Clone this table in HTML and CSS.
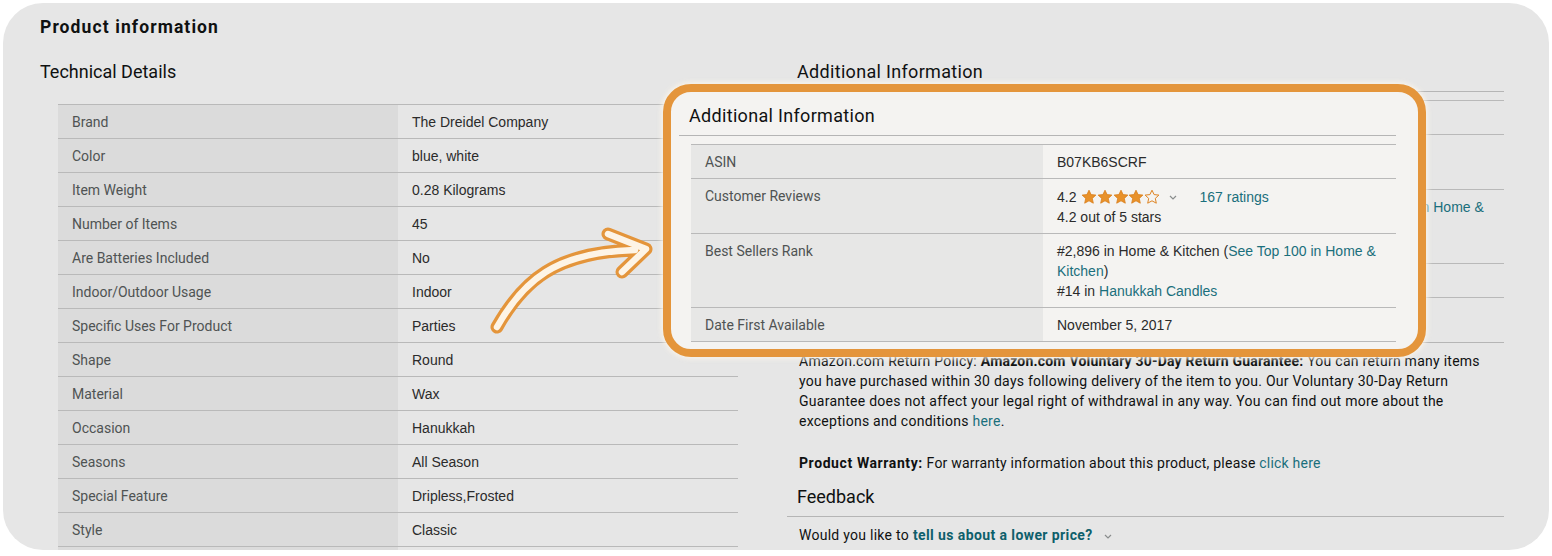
FILE: index.html
```html
<!DOCTYPE html>
<html lang="en">
<head>
<meta charset="utf-8">
<title>Product information</title>
<link rel="stylesheet" href="styles.css">
</head>
<body>
<div class="card">
  <h1 class="title">Product information</h1>
  <div class="cols">
    <section class="col-left">
      <h2 class="h2">Technical Details</h2>
      <table class="spec spec-tech">
        <tr><th>Brand</th><td>The Dreidel Company</td></tr>
        <tr><th>Color</th><td>blue, white</td></tr>
        <tr><th>Item Weight</th><td>0.28 Kilograms</td></tr>
        <tr><th>Number of Items</th><td>45</td></tr>
        <tr><th>Are Batteries Included</th><td>No</td></tr>
        <tr><th>Indoor/Outdoor Usage</th><td>Indoor</td></tr>
        <tr><th>Specific Uses For Product</th><td>Parties</td></tr>
        <tr><th>Shape</th><td>Round</td></tr>
        <tr><th>Material</th><td>Wax</td></tr>
        <tr><th>Occasion</th><td>Hanukkah</td></tr>
        <tr><th>Seasons</th><td>All Season</td></tr>
        <tr><th>Special Feature</th><td>Dripless,Frosted</td></tr>
        <tr><th>Style</th><td>Classic</td></tr>
        <tr class="row-empty"><th></th><td></td></tr>
      </table>
    </section>
    <section class="col-right">
      <div class="addl">
        <h2 class="h2 h2-rule h2-addl">Additional Information</h2>
        <table class="spec spec-addl">
          <tr><th>ASIN</th><td>B07KB6SCRF</td></tr>
          <tr><th>Customer Reviews</th><td><div class="rating"><span>4.2</span><span class="stars"><svg viewBox="0 0 16 16"><path class="s-full" d="M8 1.2L10.1 5.6L14.9 6.1L11.3 9.4L12.3 14.2L8 11.8L3.7 14.2L4.7 9.4L1.1 6.1L5.9 5.6Z"/></svg><svg viewBox="0 0 16 16"><path class="s-full" d="M8 1.2L10.1 5.6L14.9 6.1L11.3 9.4L12.3 14.2L8 11.8L3.7 14.2L4.7 9.4L1.1 6.1L5.9 5.6Z"/></svg><svg viewBox="0 0 16 16"><path class="s-full" d="M8 1.2L10.1 5.6L14.9 6.1L11.3 9.4L12.3 14.2L8 11.8L3.7 14.2L4.7 9.4L1.1 6.1L5.9 5.6Z"/></svg><svg viewBox="0 0 16 16"><path class="s-full" d="M8 1.2L10.1 5.6L14.9 6.1L11.3 9.4L12.3 14.2L8 11.8L3.7 14.2L4.7 9.4L1.1 6.1L5.9 5.6Z"/></svg><svg viewBox="0 0 16 16"><path class="s-empty" d="M8 1.2L10.1 5.6L14.9 6.1L11.3 9.4L12.3 14.2L8 11.8L3.7 14.2L4.7 9.4L1.1 6.1L5.9 5.6Z"/></svg></span><svg class="chev" viewBox="0 0 8 5"><path d="M1 1L4 4L7 1"/></svg><a class="link">167 ratings</a></div><div>4.2 out of 5 stars</div></td></tr>
          <tr><th>Best Sellers Rank</th><td>#2,896 in Home &amp; Kitchen (<a class="link">See Top 100 in Home &amp; Kitchen</a>)<br>#14 in <a class="link">Hanukkah Candles</a></td></tr>
          <tr><th>Date First Available</th><td>November 5, 2017</td></tr>
        </table>
      </div>
      <h2 class="h2 h2-rule h2-ws">Warranty &amp; Support</h2>
      <p class="para para-policy">Amazon.com Return Policy: <b>Amazon.com Voluntary 30-Day Return Guarantee:</b> You can return many items<br>you have purchased within 30 days following delivery of the item to you. Our Voluntary 30-Day Return<br>Guarantee does not affect your legal right of withdrawal in any way. You can find out more about the<br>exceptions and conditions <a class="link-ember">here</a>.</p>
      <p class="para para-warranty"><b>Product Warranty:</b> For warranty information about this product, please <a class="link-ember">click here</a></p>
      <h2 class="h2 h2-rule h2-fb">Feedback</h2>
      <p class="para para-fb">Would you like to <a class="link-bold">tell us about a lower price?</a><svg class="chev chev-fb" viewBox="0 0 8 5"><path d="M1 1L4 4L7 1"/></svg></p>
    </section>
  </div>

  <div class="callout">
    <div class="addl">
      <h2 class="h2 h2-rule h2-addl">Additional Information</h2>
      <table class="spec spec-addl spec-callout">
        <tr><th>ASIN</th><td>B07KB6SCRF</td></tr>
        <tr><th>Customer Reviews</th><td><div class="rating"><span>4.2</span><span class="stars"><svg viewBox="0 0 16 16"><path class="s-full" d="M8 1.2L10.1 5.6L14.9 6.1L11.3 9.4L12.3 14.2L8 11.8L3.7 14.2L4.7 9.4L1.1 6.1L5.9 5.6Z"/></svg><svg viewBox="0 0 16 16"><path class="s-full" d="M8 1.2L10.1 5.6L14.9 6.1L11.3 9.4L12.3 14.2L8 11.8L3.7 14.2L4.7 9.4L1.1 6.1L5.9 5.6Z"/></svg><svg viewBox="0 0 16 16"><path class="s-full" d="M8 1.2L10.1 5.6L14.9 6.1L11.3 9.4L12.3 14.2L8 11.8L3.7 14.2L4.7 9.4L1.1 6.1L5.9 5.6Z"/></svg><svg viewBox="0 0 16 16"><path class="s-full" d="M8 1.2L10.1 5.6L14.9 6.1L11.3 9.4L12.3 14.2L8 11.8L3.7 14.2L4.7 9.4L1.1 6.1L5.9 5.6Z"/></svg><svg viewBox="0 0 16 16"><path class="s-empty" d="M8 1.2L10.1 5.6L14.9 6.1L11.3 9.4L12.3 14.2L8 11.8L3.7 14.2L4.7 9.4L1.1 6.1L5.9 5.6Z"/></svg></span><svg class="chev" viewBox="0 0 8 5"><path d="M1 1L4 4L7 1"/></svg><a class="link">167 ratings</a></div><div>4.2 out of 5 stars</div></td></tr>
        <tr><th>Best Sellers Rank</th><td>#2,896 in Home &amp; Kitchen (<a class="link">See Top 100 in Home &amp; Kitchen</a>)<br>#14 in <a class="link">Hanukkah Candles</a></td></tr>
        <tr><th>Date First Available</th><td>November 5, 2017</td></tr>
      </table>
    </div>
  </div>

  <svg class="arrow" viewBox="0 0 180 115" width="180" height="115">
    <g fill="none" stroke-linecap="round" stroke-linejoin="round">
      <path class="arrow-out" d="M12 102 C 38 56, 70 27, 150 25 M123 9 L161 24 L137 47"/>
      <path class="arrow-in" d="M12 102 C 38 56, 70 27, 150 25 M123 9 L161 24 L137 47"/>
    </g>
  </svg>
</div>
</body>
</html>
```

FILE: styles.css
```css
html, body {
  margin: 0;
  padding: 0;
  background: #ffffff;
}

body {
  width: 1552px;
  height: 556px;
  overflow: hidden;
  font-family: Roboto, "Liberation Sans", Arial, sans-serif;
  color: #0f1111;
}

.card {
  position: relative;
  margin: 3px 0 0 3px;
  width: 1546px;
  height: 547px;
  box-sizing: border-box;
  padding: 11px 45px 0 37px;
  background: #e6e6e6;
  border-radius: 40px;
  overflow: hidden;
}

.title {
  margin: 0;
  font-size: 17.5px;
  line-height: 27px;
  font-weight: 700;
  letter-spacing: 1.1px;
  color: #0f1111;
}

.cols {
  display: flex;
  gap: 49px;
  margin-top: 19px;
}

.col-left {
  width: 698px;
  flex: none;
}

.col-right {
  width: 717px;
  flex: none;
}

.h2 {
  margin: 0;
  font-size: 18px;
  line-height: 24px;
  font-weight: 400;
  color: #0f1111;
}

.h2-addl {
  letter-spacing: 0.32px;
}

.col-left .h2 {
  margin-bottom: 20px;
}

.h2-rule {
  padding: 0 0 7px 10px;
  border-bottom: 1px solid #b5b5b5;
}

.spec {
  border-collapse: collapse;
  border-spacing: 0;
  table-layout: fixed;
  font-size: 14px;
  line-height: 20px;
}

.spec tr {
  border-top: 1px solid #b9b9b9;
}

.spec tr:last-child {
  border-bottom: 1px solid #b9b9b9;
}

.spec th {
  text-align: left;
  font-weight: 400;
  color: #4f5353;
  background: #dbdbdb;
  padding: 7px 14px 6px;
  vertical-align: top;
  font-family: Roboto, sans-serif;
}

.spec td {
  color: #2b2b2b;
  padding: 7px 14px 6px;
  vertical-align: top;
  font-family: "Liberation Sans", Arial, sans-serif;
}

.spec .row-empty th,
.spec .row-empty td {
  height: 20px;
}

.spec-tech {
  margin-left: 18px;
  width: 680px;
}

.spec-tech th,
.spec-tech td {
  width: 312px;
}

.spec-addl {
  margin: 8px 0 0 12px;
  width: 705px;
}

.spec-addl th {
  width: 324px;
  background: #e2e2e2;
}

.spec-addl td {
  width: 325px;
}

.rating {
  display: flex;
  align-items: center;
  height: 21px;
}

.stars {
  display: flex;
  margin-left: 5px;
}

.stars svg {
  width: 16px;
  height: 16px;
  margin-right: -0.4px;
}

.s-full {
  fill: #e8912a;
  stroke: #d97f1c;
  stroke-width: 0.8;
  stroke-linejoin: round;
}

.s-empty {
  fill: none;
  stroke: #de8322;
  stroke-width: 1;
  stroke-linejoin: round;
}

.chev {
  width: 8px;
  height: 5px;
  margin: 2px 0 0 9px;
}

.chev path {
  fill: none;
  stroke: #8a8d8d;
  stroke-width: 1.2;
}

.rating .link {
  margin-left: 23px;
}

.link {
  color: #1a6f7c;
  text-decoration: none;
}

.link-ember {
  color: #1a6f7c;
  text-decoration: none;
}

.link-bold {
  color: #0e5f6b;
  font-weight: 700;
  letter-spacing: 0.4px;
  text-decoration: none;
}

.h2-ws {
  margin-top: 13px;
}

.para {
  margin: 0;
  padding-left: 12px;
  font-size: 14px;
  line-height: 20px;
  letter-spacing: 0.26px;
  color: #0f1111;
}

.para-policy b {
  letter-spacing: 0.2px;
}

.para-warranty b {
  letter-spacing: 0.6px;
}

.para-warranty {
  margin-top: 22px;
  letter-spacing: 0.22px;
}

.para-policy {
  margin-top: 8px;
  white-space: nowrap;
}

.h2-fb {
  margin-top: 12px;
}

.para-fb {
  margin-top: 8px;
  display: flex;
  align-items: center;
  gap: 4px;
}

.chev-fb {
  margin: 2px 0 0 7px;
}

.callout {
  position: absolute;
  left: 660px;
  top: 81px;
  width: 763px;
  height: 273px;
  box-sizing: border-box;
  border: 8px solid #e4953b;
  border-radius: 28px;
  background: #f4f3f1;
  padding: 12px 22px 0 8px;
  box-shadow: 0 0 5px 2px rgba(250, 244, 234, 0.9);
}

.callout .addl {
  width: 717px;
}

.spec-callout th {
  background: #e7e7e6;
}

.spec-callout td {
  background: #f4f3f1;
}

.arrow {
  position: absolute;
  left: 482px;
  top: 222px;
  overflow: visible;
}

.arrow-out {
  stroke: #e4953b;
  stroke-width: 13;
}

.arrow-in {
  stroke: #fdf4e6;
  stroke-width: 6.5;
}
```
